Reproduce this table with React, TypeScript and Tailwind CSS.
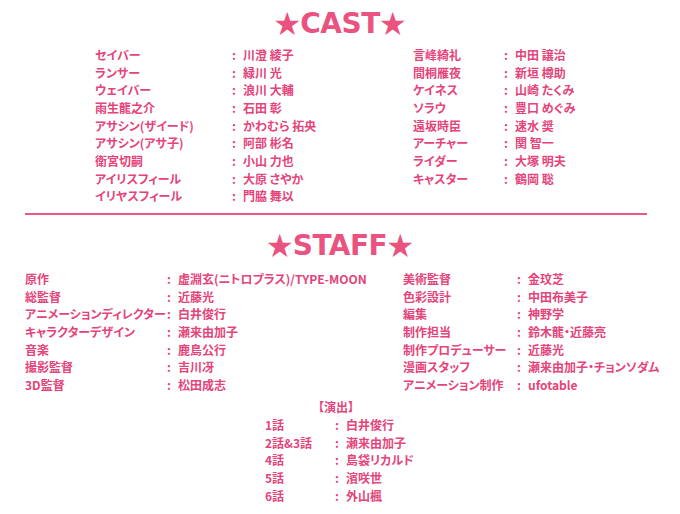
const cast: [string, string][] = [
  ["セイバー", "川澄 綾子"],
  ["ランサー", "緑川 光"],
  ["ウェイバー", "浪川 大輔"],
  ["雨生龍之介", "石田 彰"],
  ["アサシン(ザイード)", "かわむら 拓央"],
  ["アサシン(アサ子)", "阿部 彬名"],
  ["衛宮切嗣", "小山 力也"],
  ["アイリスフィール", "大原 さやか"],
  ["イリヤスフィール", "門脇 舞以"],
];

const cast2: [string, string][] = [
  ["言峰綺礼", "中田 譲治"],
  ["間桐雁夜", "新垣 樽助"],
  ["ケイネス", "山崎 たくみ"],
  ["ソラウ", "豊口 めぐみ"],
  ["遠坂時臣", "速水 奨"],
  ["アーチャー", "関 智一"],
  ["ライダー", "大塚 明夫"],
  ["キャスター", "鶴岡 聡"],
];

const staff: [string, string][] = [
  ["原作", "虚淵玄(ニトロプラス)/TYPE-MOON"],
  ["総監督", "近藤光"],
  ["アニメーションディレクター", "白井俊行"],
  ["キャラクターデザイン", "瀬来由加子"],
  ["音楽", "鹿島公行"],
  ["撮影監督", "吉川冴"],
  ["3D監督", "松田成志"],
];

const staff2: [string, string][] = [
  ["美術監督", "金玟芝"],
  ["色彩設計", "中田布美子"],
  ["編集", "神野学"],
  ["制作担当", "鈴木龍・近藤亮"],
  ["制作プロデューサー", "近藤光"],
  ["漫画スタッフ", "瀬来由加子・チョンソダム"],
  ["アニメーション制作", "ufotable"],
];

const episodes: [string, string][] = [
  ["1話", "白井俊行"],
  ["2話&3話", "瀬来由加子"],
  ["4話", "島袋リカルド"],
  ["5話", "濱咲世"],
  ["6話", "外山楓"],
];

function Rows({ rows, labelW }: { rows: [string, string][]; labelW: string }) {
  return (
    <div className="flex flex-col">
      {rows.map(([label, name]) => (
        <div key={label} className="flex h-[17.7px] items-center whitespace-nowrap">
          <span className={labelW}>{label}</span>
          <span className="w-[11px]">:</span>
          <span>{name}</span>
        </div>
      ))}
    </div>
  );
}

function Title({ text }: { text: string }) {
  return (
    <h2 className="flex h-[34px] items-center justify-center font-bold text-[#ea5280] leading-none">
      <span className="text-[26px] font-['Noto_Sans_CJK_JP',sans-serif] mb-[4px]">★</span>
      <span className="text-[28px] font-['DejaVu_Sans',sans-serif] tracking-[-0.5px]">{text}</span>
      <span className="text-[26px] font-['Noto_Sans_CJK_JP',sans-serif] mb-[4px]">★</span>
    </h2>
  );
}

export default function App() {
  return (
    <div className="w-[680px] h-[514px] bg-white overflow-hidden text-[#e4447a] text-[12px] font-bold font-['Noto_Sans_CJK_JP',sans-serif] [font-feature-settings:'palt']">
      {/* CAST */}
      <div className="pt-[7px]">
        <Title text="CAST" />
      </div>
      <div className="flex pl-[95px] pt-[5px]">
        <div className="w-[318px]">
          <Rows rows={cast} labelW="w-[137px]" />
        </div>
        <Rows rows={cast2} labelW="w-[91px]" />
      </div>

      <div className="mx-[25px] mt-[8px] w-[622px] h-[2px] bg-[#f0577f]" />

      {/* STAFF */}
      <div className="pt-[14px]">
        <Title text="STAFF" />
      </div>
      <div className="flex pl-[25px] pt-[7px]">
        <div className="w-[378px]">
          <Rows rows={staff} labelW="w-[142px]" />
        </div>
        <Rows rows={staff2} labelW="w-[114px]" />
      </div>

      {/* 演出 */}
      <div className="pt-[4px] pl-[318px] h-[22px] flex items-center">【演出】</div>
      <div className="pl-[265px]">
        <Rows rows={episodes} labelW="w-[70px]" />
      </div>
    </div>
  );
}
